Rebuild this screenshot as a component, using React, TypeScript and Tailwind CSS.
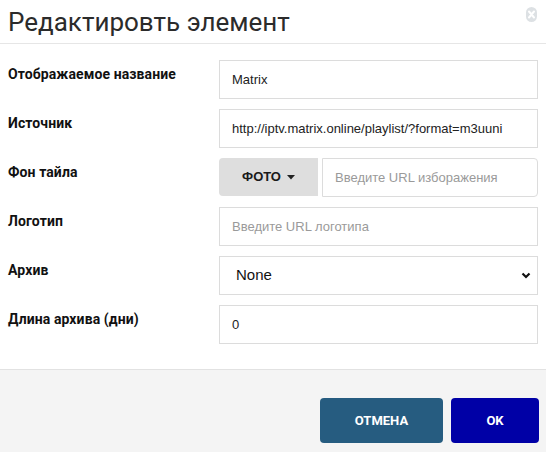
import React from 'react';

const labelCls = "pt-[4px] text-[14px] font-bold leading-[20px] tracking-[0.1px] text-[#111]";
const inputCls =
  "h-[39px] w-full border border-[#dcdcdc] bg-white px-[12px] font-['Liberation_Sans',Arial,sans-serif] text-[13px] text-[#222] outline-none placeholder:text-[#9a9a9a]";

const Row = ({ label, children }: { label: string; children: React.ReactNode }) => (
  <div className="mb-[10px] flex">
    <div className="w-[219px] shrink-0 pl-[8px]">
      <div className={labelCls}>{label}</div>
    </div>
    <div className="w-[319px]">{children}</div>
  </div>
);

const CloseIcon = () => (
  <svg width="11" height="15" viewBox="0 0 11 15">
    <rect x="0" y="0" width="11" height="15" rx="5.5" fill="#dde1e4" />
    <path d="M3 4.5 L8 10.5 M8 4.5 L3 10.5" stroke="#fff" strokeWidth="2" strokeLinecap="round" />
  </svg>
);

export default function App() {
  return (
    <div className="flex h-[452px] w-[546px] flex-col bg-white font-['Roboto',sans-serif]">
      {/* header */}
      <div className="flex h-[44px] shrink-0 items-start justify-between border-b border-[#e6e6e6] pl-[8px] pr-[9px]">
        <h2 className="pt-[4px] text-[26px] font-normal leading-[36px] text-[#2b2b2b]">
          Редактировть элемент
        </h2>
        <div className="pt-[7px]">
          <CloseIcon />
        </div>
      </div>

      {/* body */}
      <div className="pt-[16px] pb-[15px]">
        <Row label="Отображаемое название">
          <input className={inputCls} defaultValue="Matrix" />
        </Row>
        <Row label="Источник">
          <input className={inputCls} defaultValue="http://iptv.matrix.online/playlist/?format=m3uuni" />
        </Row>
        <Row label="Фон тайла">
          <div className="flex h-[39px] gap-[4px]">
            <button className="flex h-[38px] w-[99px] shrink-0 items-center justify-center gap-[6px] rounded-l-[4px] bg-[#dedede] font-['Liberation_Sans',Arial,sans-serif] text-[13px] font-bold text-[#1a1a1a]">
              ФОТО
              <svg width="8" height="5" viewBox="0 0 8 5">
                <path d="M0 0 H8 L4 4.5 Z" fill="#222" />
              </svg>
            </button>
            <input className={inputCls + " rounded-r-[4px]"} placeholder="Введите URL изборажения" />
          </div>
        </Row>
        <Row label="Логотип">
          <input className={inputCls} placeholder="Введите URL логотипа" />
        </Row>
        <Row label="Архив">
          <div className="relative">
            <select className="h-[39px] w-full appearance-none border border-[#dcdcdc] bg-white pl-[16px] font-['Liberation_Sans',Arial,sans-serif] text-[15px] text-[#111] outline-none">
              <option>None</option>
            </select>
            <svg className="pointer-events-none absolute right-[7px] top-[16px]" width="10" height="7" viewBox="0 0 10 7">
              <path d="M1.5 1.5 L5 5 L8.5 1.5" stroke="#111" strokeWidth="2.2" fill="none" />
            </svg>
          </div>
        </Row>
        <Row label="Длина архива (дни)">
          <input className={inputCls} defaultValue="0" />
        </Row>
      </div>

      {/* footer */}
      <div className="flex flex-1 items-start justify-end gap-[8px] border-t border-[#e2e2e2] bg-[#f4f4f4] pr-[7px] pt-[28px]">
        <button className="h-[45px] w-[123px] rounded-[4px] bg-[#265c80] text-[13px] font-bold text-white">
          ОТМЕНА
        </button>
        <button className="h-[45px] w-[88px] rounded-[4px] bg-[#0000a6] text-[13px] font-bold text-white">
          OK
        </button>
      </div>
    </div>
  );
}
